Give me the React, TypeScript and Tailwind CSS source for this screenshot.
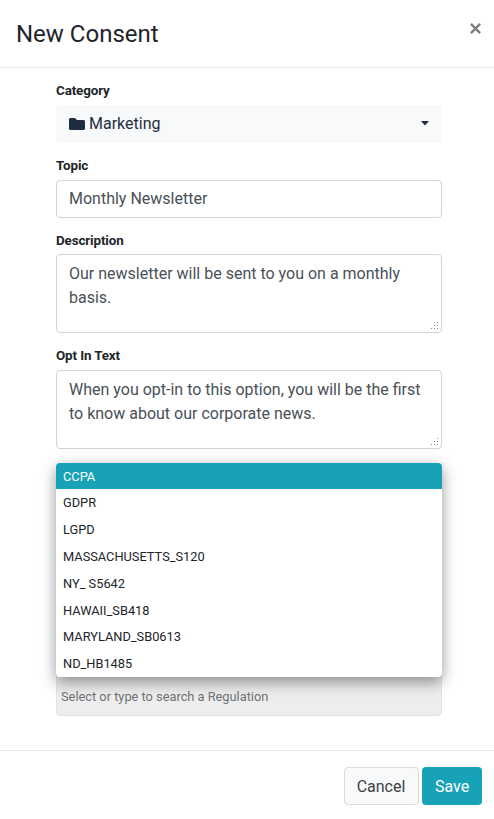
import type { ReactNode } from "react";

const regulations = [
  "CCPA",
  "GDPR",
  "LGPD",
  "MASSACHUSETTS_S120",
  "NY_ S5642",
  "HAWAII_SB418",
  "MARYLAND_SB0613",
  "ND_HB1485",
];

function Label({ children }: { children: ReactNode }) {
  return (
    <div className="h-5 pt-px text-[13.4px] leading-5 font-bold tracking-[-0.12px] text-[#212529]">{children}</div>
  );
}

function TextArea({ lines }: { lines: string[] }) {
  return (
    <div className="relative h-[79px] rounded border border-[#ced4da] bg-white px-3 pt-[7px] leading-6 text-[#495057]">
      {lines.map((line) => (
        <div key={line} className="whitespace-nowrap">{line}</div>
      ))}
      <svg className="absolute right-[2px] bottom-[2px]" width="9" height="9" viewBox="0 0 9 9" fill="#888" shapeRendering="crispEdges">
        <path d="M7 1h1v1h-1zM4 4h1v1h-1zM7 4h1v1h-1zM1 7h1v1h-1zM4 7h1v1h-1zM7 7h1v1h-1z" />
      </svg>
    </div>
  );
}

export default function App() {
  return (
    <div className="flex h-[819px] w-[494px] flex-col overflow-hidden bg-white font-['Roboto',sans-serif] text-base text-[#212529]">
      <header className="flex h-[68px] shrink-0 items-center justify-between border-b border-[#e9ecef] pr-3 pl-4">
        <h1 className="text-2xl leading-9">New Consent</h1>
        <button className="-mt-2.5 flex size-[13px] items-center justify-center" aria-label="Close">
          <svg width="11" height="11" viewBox="0 0 11 11" fill="none" stroke="#7f7f7f" strokeWidth="2.5">
            <path d="M.9.9l9.2 9.2M10.1.9L.9 10.1" />
          </svg>
        </button>
      </header>

      <main className="flex h-[682px] shrink-0 flex-col px-14 pt-3 pr-[52px]">
        <Label>Category</Label>
        <div className="mt-[5px] flex h-[38px] items-center rounded bg-[#f8f9fa] px-3">
          <svg className="mr-1 -mt-px ml-px" width="16" height="16" viewBox="0 0 16 16" fill="#1f2d41">
            <path d="M1.5 2H6L8 4H14.5C15.3 4 16 4.7 16 5.5V12.5C16 13.3 15.3 14 14.5 14H1.5C.7 14 0 13.3 0 12.5V3.5C0 2.7.7 2 1.5 2Z" />
          </svg>
          <span className="grow text-[#1f2d41]">Marketing</span>
          <svg className="-mt-px" width="10" height="5" viewBox="0 0 10 5" fill="#1f2d41">
            <path d="M1 0H9L5 4.5Z" />
          </svg>
        </div>

        <div className="mt-3">
          <Label>Topic</Label>
          <div className="mt-[5px] h-[38px] rounded border border-[#ced4da] px-3 py-1.5 leading-6 text-[#495057]">
            Monthly Newsletter
          </div>
        </div>

        <div className="mt-3">
          <Label>Description</Label>
          <div className="mt-1">
            <TextArea lines={["Our newsletter will be sent to you on a monthly", "basis."]} />
          </div>
        </div>

        <div className="mt-3">
          <Label>Opt In Text</Label>
          <div className="mt-[5px]">
            <TextArea lines={["When you opt-in to this option, you will be the first", "to know about our corporate news."]} />
          </div>
        </div>

        <div className="relative mt-3.5 flex h-[253px] shrink-0 flex-col justify-end">
          <div className="h-[60px] rounded border border-[#e3e3e3] bg-[#ededed] px-1 pt-[30px] text-[12.8px] leading-5 text-[#6f7275]">
            Select or type to search a Regulation
          </div>
          <ul className="absolute inset-x-0 top-0 h-[214px] overflow-hidden rounded bg-white text-[12.8px] shadow-[0_5px_15px_rgba(0,0,0,0.42)]">
            {regulations.map((name, i) => (
              <li
                key={name}
                className={
                  i === 0
                    ? "h-[26.4px] bg-[#17a2b8] px-[7px] pt-[0.6px] leading-[26.8px] text-white"
                    : "h-[26.8px] px-[7px] pt-px leading-[26.8px] text-[#212529]"
                }
              >
                {name}
              </li>
            ))}
          </ul>
        </div>
      </main>

      <footer className="flex grow items-start justify-end gap-[3px] border-t border-[#e9ecef] pt-4 pr-3">
        <button className="h-[38px] w-[75px] rounded border border-[#d8dbdf] bg-[#f8f9fa] pt-0.5 pr-px text-[#3c4146]">Cancel</button>
        <button className="h-[38px] w-[60px] rounded bg-[#17a2b8] pt-px text-white">Save</button>
      </footer>
    </div>
  );
}
